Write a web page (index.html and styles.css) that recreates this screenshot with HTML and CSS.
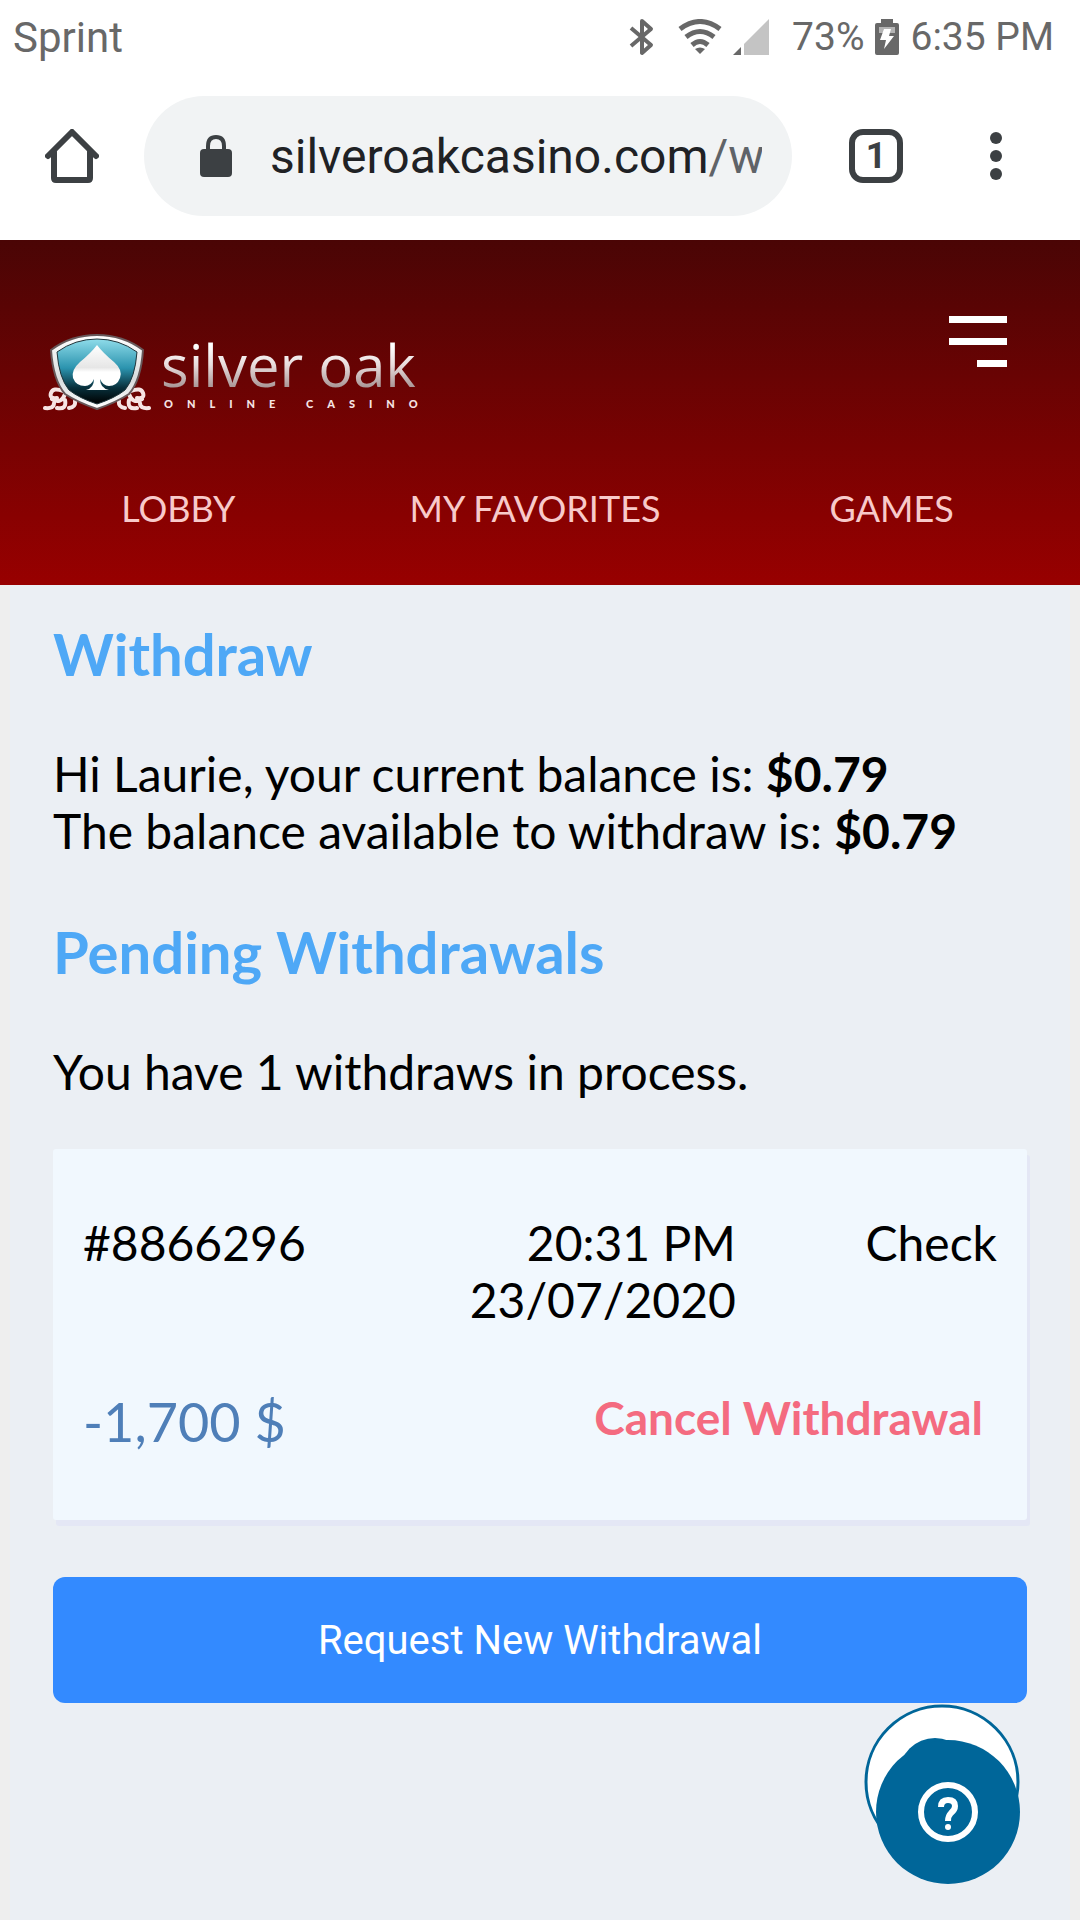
FILE: index.html
```html
<!DOCTYPE html>
<html lang="en">
<head>
    <meta charset="UTF-8">
    <meta name="viewport" content="width=device-width, initial-scale=1.0">
    <title>Withdraw - Silver Oak Online Casino</title>
    <link rel="stylesheet" href="styles.css">
</head>
<body>
    <div class="status-bar">
        <span class="carrier">Sprint</span>
        <div class="status-icons">
            <svg class="bluetooth" width="26" height="38" viewBox="0 0 26 38" fill="none" stroke="#686868" stroke-width="4">
                <path d="M2 10 L22 27 L13 35 V3 L22 11 L2 28" stroke-linejoin="round"/>
            </svg>
            <svg class="wifi" width="44" height="36" viewBox="0 0 44 36" fill="none" stroke="#686868" stroke-width="5">
                <path d="M2 10 Q22 -5 42 10"/>
                <path d="M8 18 Q22 7 36 18"/>
                <path d="M14 26 Q22 19 30 26"/>
                <path d="M17 30 Q22 27 27 30 L22 35 Z" fill="#686868" stroke="none"/>
            </svg>
            <svg class="signal" width="36" height="36" viewBox="0 0 36 36">
                <path d="M11 25 L36 0 V36 H11 Z" fill="#c4c4c4"/>
                <path d="M0 36 L8 28 V36 Z" fill="#686868"/>
            </svg>
            <span>73%</span>
            <svg class="battery" width="24" height="36" viewBox="0 0 24 36">
                <path d="M6 0 H18 V4 H22 Q24 4 24 6 V34 Q24 36 22 36 H2 Q0 36 0 34 V6 Q0 4 2 4 H6 Z" fill="#686868"/>
                <path d="M4 8 H20 V14 H4 Z" fill="#b4b4b4"/>
                <path d="M9 10 H16 L14 17 H19 L9 30 L11 21 H5 Z" fill="#fff"/>
            </svg>
            <span>6:35 PM</span>
        </div>
    </div>

    <div class="toolbar">
        <button class="icon-btn" aria-label="Home">
            <svg width="54" height="54" viewBox="0 0 54 54" fill="none" stroke="#3c4043" stroke-width="6" stroke-linejoin="round" stroke-linecap="round">
                <path d="M3 27 L27 3 L51 27"/>
                <path d="M9 23 V49 Q9 51 11 51 H43 Q45 51 45 49 V23"/>
            </svg>
        </button>
        <div class="address">
            <svg width="32" height="42" viewBox="0 0 32 42">
                <path d="M8 17 V11 Q8 2 16 2 Q24 2 24 11 V17" fill="none" stroke="#3c4043" stroke-width="4"/>
                <rect y="14" width="32" height="28" rx="4" fill="#3c4043"/>
            </svg>
            <div class="url">silveroakcasino.com<span class="path">/w</span></div>
        </div>
        <button class="tabs-btn" aria-label="Open tabs">1</button>
        <button class="icon-btn" aria-label="More">
            <svg width="12" height="48" viewBox="0 0 12 48" fill="#3c4043">
                <circle cx="6" cy="6" r="6"/>
                <circle cx="6" cy="24" r="6"/>
                <circle cx="6" cy="42" r="6"/>
            </svg>
        </button>
    </div>

    <header class="header">
        <div class="header-top">
            <a class="logo" href="#">
                <svg width="108" height="78" viewBox="0 0 108 78">
                    <defs>
                        <linearGradient id="shield" x1="0" y1="0" x2="0" y2="1">
                            <stop offset="0" stop-color="#8fdcea"/>
                            <stop offset="0.45" stop-color="#2b93ae"/>
                            <stop offset="0.75" stop-color="#08303c"/>
                            <stop offset="1" stop-color="#000"/>
                        </linearGradient>
                        <linearGradient id="rim" x1="0" y1="0" x2="0" y2="1">
                            <stop offset="0" stop-color="#fff"/>
                            <stop offset="0.6" stop-color="#d8dcde"/>
                            <stop offset="1" stop-color="#fff"/>
                        </linearGradient>
                        <linearGradient id="spade" x1="0" y1="0" x2="0" y2="1">
                            <stop offset="0" stop-color="#fff"/>
                            <stop offset="0.5" stop-color="#e6e6e6"/>
                            <stop offset="0.6" stop-color="#fff"/>
                        </linearGradient>
                    </defs>
                    <g fill="none" stroke="#f6e4e4" stroke-width="4" stroke-linecap="round">
                        <path d="M20 58 Q10 54 8 60 Q6 66 14 65 M22 61 Q18 72 9 66 M2 75 Q11 76 11 70 M14 75 Q24 77 22 67 M26 75 Q33 74 32 68"/>
                        <path d="M88 58 Q98 54 100 60 Q102 66 94 65 M86 61 Q90 72 99 66 M106 75 Q97 76 97 70 M94 75 Q84 77 86 67 M82 75 Q75 74 76 68"/>
                    </g>
                    <path d="M8 17 Q28 2 54 2 Q80 2 100 17 Q98 47 86 61 Q74 69 54 76 Q34 69 22 61 Q10 47 8 17 Z" fill="url(#rim)" stroke="#67585a" stroke-width="2"/>
                    <path d="M14 19 Q32 6 54 6 Q76 6 94 19 Q92 45 82 57 Q72 65 54 71 Q36 65 26 57 Q16 45 14 19 Z" fill="url(#shield)" stroke="#20343a" stroke-width="1"/>
                    <path d="M54 12 Q60 20 71 29 Q80 37 77 45 Q74 53 66 53 Q60 53 57 46 Q57 55 66 57 H43 Q51 55 51 46 Q48 53 42 53 Q33 53 30 45 Q28 37 37 29 Q48 20 54 12 Z" fill="url(#spade)"/>
                </svg>
                <span class="logo-text">
                    <span class="logo-name">silver oak</span>
                    <span class="logo-tag">ONLINE CASINO</span>
                </span>
            </a>
            <button class="menu-btn" aria-label="Menu">
                <span class="bar"></span>
                <span class="bar"></span>
                <span class="bar short"></span>
            </button>
        </div>
        <nav class="nav">
            <a href="#">LOBBY</a>
            <a href="#">MY FAVORITES</a>
            <a href="#">GAMES</a>
        </nav>
    </header>

    <main class="content">
        <h2>Withdraw</h2>
        <p>Hi Laurie, your current balance is: <b>$0.79</b><br>
        The balance available to withdraw is: <b>$0.79</b></p>

        <h2>Pending Withdrawals</h2>
        <p>You have 1 withdraws in process.</p>

        <div class="card">
            <div class="card-info">
                <span>#8866296</span>
                <span class="date">20:31 PM<br>23/07/2020</span>
                <span class="method">Check</span>
            </div>
            <div class="card-actions">
                <span class="amount">-1,700 $</span>
                <button class="cancel-btn">Cancel Withdrawal</button>
            </div>
        </div>

        <button class="request-btn">Request New Withdrawal</button>
    </main>

    <button class="help-btn" aria-label="Help">
        <svg width="156" height="180" viewBox="0 0 156 180">
            <circle cx="78" cy="78" r="76" fill="#fff" stroke="#006699" stroke-width="3"/>
            <circle cx="71" cy="70" r="36" fill="#006699"/>
            <circle cx="84" cy="108" r="72" fill="#006699"/>
            <circle cx="84" cy="108" r="27" fill="none" stroke="#fff" stroke-width="6"/>
            <path d="M77 103 Q77 96 84 96 Q91 96 91 102 Q91 106 87 109 Q84 112 84 117" fill="none" stroke="#fff" stroke-width="6"/>
            <circle cx="84" cy="123" r="3" fill="#fff"/>
        </svg>
    </button>
</body>
</html>
```
FILE: styles.css
```css
* {
    box-sizing: border-box;
}

body {
    font-family: Lato, sans-serif;
    margin: 0;
    min-height: 100vh;
    display: flex;
    flex-direction: column;
    background-color: #eeeeee;
    color: #000;
}

button {
    padding: 0;
    border: none;
    background: none;
    cursor: pointer;
}

a {
    text-decoration: none;
}

svg {
    display: block;
    flex-shrink: 0;
}

/* Phone status bar */
.status-bar {
    display: flex;
    justify-content: space-between;
    align-items: center;
    height: 72px;
    padding: 2px 26px 0 13px;
    background: #fff;
    color: #686868;
    font-family: Roboto, sans-serif;
    font-size: 39px;
}

.carrier {
    font-size: 42px;
}

.status-icons {
    display: flex;
    align-items: center;
    gap: 11px;
}

.bluetooth,
.signal {
    margin-right: 12px;
}

/* Browser toolbar */
.toolbar {
    display: flex;
    align-items: center;
    height: 168px;
    padding: 0 78px 0 45px;
    background: #fff;
    font-family: Roboto, sans-serif;
}

.address {
    display: flex;
    flex: 1;
    align-items: center;
    gap: 38px;
    min-width: 0;
    height: 120px;
    margin: 0 57px 0 45px;
    padding: 0 30px 0 56px;
    border-radius: 60px;
    background: #f1f3f4;
}

.url {
    flex: 1;
    overflow: hidden;
    white-space: nowrap;
    font-size: 48px;
    color: #202124;
}

.url .path {
    color: #5f6368;
}

.tabs-btn {
    width: 54px;
    height: 54px;
    margin-right: 87px;
    border: 6px solid #3c4043;
    border-radius: 14px;
    color: #3c4043;
    font-family: Roboto, sans-serif;
    font-size: 36px;
    font-weight: bold;
    line-height: 42px;
}

/* Site header */
.header {
    padding: 76px 0 56px;
    background: linear-gradient(#4a0505, #980000);
}

.header-top {
    display: flex;
    justify-content: space-between;
    align-items: flex-start;
    padding: 0 73px 0 43px;
}

.logo {
    display: flex;
    gap: 10px;
    padding-top: 17px;
}

.logo-text {
    display: flex;
    flex-direction: column;
}

.logo-name {
    font-family: "Open Sans", sans-serif;
    font-size: 58px;
    font-weight: 500;
    line-height: 64px;
    background: linear-gradient(#fff 20%, #e8dcdc 50%, #a08c8c 90%);
    -webkit-background-clip: text;
    background-clip: text;
    color: transparent;
}

.logo-tag {
    padding-left: 3px;
    font-size: 11px;
    font-weight: 900;
    line-height: 14px;
    letter-spacing: 14px;
    color: #f6e4e4;
}

.menu-btn {
    display: flex;
    flex-direction: column;
    align-items: flex-end;
    gap: 15px;
}

.bar {
    width: 58px;
    height: 7px;
    background: #fff;
}

.bar.short {
    width: 30px;
}

.nav {
    display: grid;
    grid-template-columns: repeat(3, 1fr);
    padding: 76px 10px 0 0;
    text-align: center;
}

.nav a {
    font-size: 36px;
    line-height: 42px;
    color: #f8caca;
}

/* Page content */
.content {
    flex: 1;
    margin: 0 10px;
    padding: 34px 43px 0;
    background: #ebeff4;
}

h2 {
    margin: 0 0 56px;
    font-size: 58px;
    line-height: 70px;
    color: #4ea8f6;
}

p {
    margin: 0 0 58px;
    font-size: 48px;
    line-height: 57px;
}

.card {
    margin-top: -9px;
    padding: 65px 30px 66px;
    border-radius: 3px;
    background: #f1f8fe;
    box-shadow: 3px 6px 0 #e4e7f5;
    font-size: 48px;
    line-height: 57px;
}

.card-info {
    display: grid;
    grid-template-columns: 5fr 5fr 4fr;
}

.date,
.method {
    text-align: right;
}

.card-actions {
    display: flex;
    justify-content: space-between;
    align-items: flex-start;
    margin-top: 61px;
    padding-right: 14px;
}

.amount {
    font-size: 54px;
    line-height: 65px;
    color: #4f7fb8;
}

.cancel-btn {
    font-family: Lato, sans-serif;
    font-size: 46px;
    font-weight: bold;
    line-height: 57px;
    color: #f46b80;
}

.request-btn {
    display: block;
    width: 100%;
    height: 126px;
    margin-top: 57px;
    border-radius: 12px;
    background: #338aff;
    color: #fff;
    font-family: Roboto, sans-serif;
    font-size: 40px;
}

/* Floating help button */
.help-btn {
    position: fixed;
    right: 60px;
    bottom: 36px;
}
```
